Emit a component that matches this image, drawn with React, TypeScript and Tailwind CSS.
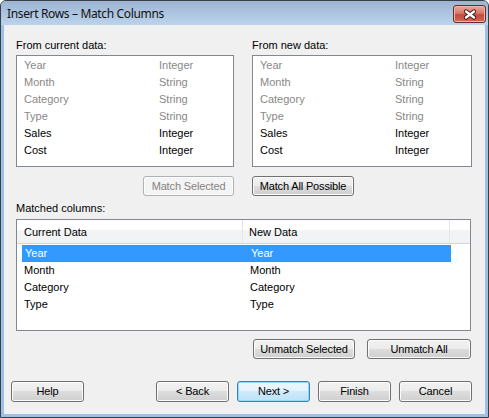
import React from 'react';

type Item = { name: string; type: string; used?: boolean };

const items: Item[] = [
    { name: 'Year', type: 'Integer', used: true },
    { name: 'Month', type: 'String', used: true },
    { name: 'Category', type: 'String', used: true },
    { name: 'Type', type: 'String', used: true },
    { name: 'Sales', type: 'Integer' },
    { name: 'Cost', type: 'Integer' },
];

const matched = ['Year', 'Month', 'Category', 'Type'];

const Btn = ({ label, className = '', disabled, isDefault }: { label: string; className?: string; disabled?: boolean; isDefault?: boolean }) => {
    let look = 'border-[#707070] text-black bg-[linear-gradient(to_bottom,#f2f2f2_0%,#ebebeb_50%,#dddddd_50%,#cfcfcf_100%)] shadow-[inset_0_0_0_1px_#fbfbfb]';
    if (disabled) look = 'border-[#adb2b5] text-[#838383] bg-[#f4f4f4] shadow-[inset_0_0_0_1px_#fcfcfc]';
    if (isDefault) look = 'border-[#3c7fb1] text-black bg-[linear-gradient(to_bottom,#eef7fd_0%,#e2f2fc_50%,#cdebfb_50%,#bde2f6_100%)] shadow-[inset_0_0_0_1px_#8edaf8]';
    return (
        <div className={`flex items-center justify-center rounded-[3px] border text-[11px] leading-[13px] tracking-[-0.15px] ${look} ${className}`}>
            {label}
        </div>
    );
};

const ListBox = ({ className = '' }: { className?: string }) => (
    <div className={`h-[112px] border border-[#828790] bg-white pt-[1px] ${className}`}>
        {items.map((it) => (
            <div key={it.name} className={`flex h-[17px] items-center pl-[7px] ${it.used ? 'text-[#888888]' : 'text-black'}`}>
                <span className="w-[135px]">{it.name}</span>
                <span>{it.type}</span>
            </div>
        ))}
    </div>
);

export default function App() {
    return (
        <div className="w-[489px] h-[418px] overflow-hidden rounded-t-[6px] border border-[#3a3f47] bg-[#9cc0e8] flex flex-col font-['Liberation_Sans',Arial,sans-serif]">
            {/* title bar */}
            <div className="h-[24px] shrink-0 flex items-start justify-between bg-gradient-to-b from-[#9cb5d4] to-[#bcd3eb] pl-[6px] pr-[2px]">
                <span className="mt-[5px] text-[12px] leading-[15px] text-[#111] font-['Noto_Sans',sans-serif] tracking-[-0.35px]">
                    Insert Rows – Match Columns
                </span>
                <div className="mt-[4px] w-[33px] h-[18px] rounded-[3px] border border-[#6b2b25] bg-[linear-gradient(to_bottom,#e9a99b_0%,#d8786a_45%,#c34a3b_55%,#cf6a55_100%)] shadow-[inset_0_0_0_1px_#efb7a9] flex items-center justify-center">
                    <svg width="14" height="11" viewBox="0 0 14 11">
                        <path d="M3 2.5 L11 8.5 M11 2.5 L3 8.5" stroke="#4a1410" strokeWidth="4.2" strokeLinecap="round" />
                        <path d="M3 2.5 L11 8.5 M11 2.5 L3 8.5" stroke="#ffffff" strokeWidth="2.4" strokeLinecap="round" />
                    </svg>
                </div>
            </div>

            {/* client area */}
            <div className="flex-1 mx-[3px] mb-[3px] bg-[#f0f0f0] pl-[12px] pr-[13px] pt-[14px] text-[11px] leading-[13px] text-black">
                <div className="flex justify-between">
                    <div className="w-[218px] flex flex-col">
                        <div className="h-[13px]">From current data:</div>
                        <ListBox className="mt-[3px]" />
                        <div className="mt-[9px] flex justify-end">
                            <Btn label="Match Selected" disabled className="w-[91px] h-[20px]" />
                        </div>
                    </div>
                    <div className="w-[220px] flex flex-col">
                        <div className="h-[13px]">From new data:</div>
                        <ListBox className="mt-[3px]" />
                        <div className="mt-[9px] flex">
                            <Btn label="Match All Possible" className="w-[102px] h-[20px]" />
                        </div>
                    </div>
                </div>

                <div className="mt-[6px] h-[13px]">Matched columns:</div>
                <div className="mt-[4px] w-[455px] h-[112px] border border-[#828790] bg-white">
                    <div className="h-[24px] flex border-b border-[#d5d5d5] bg-[linear-gradient(to_bottom,#ffffff_0%,#ffffff_45%,#f3f4f6_45%,#f1f2f4_100%)]">
                        <div className="w-[226px] flex items-center pl-[7px] pt-[2px] border-r border-[#e3e6ea]">Current Data</div>
                        <div className="w-[207px] flex items-center pl-[6px] pt-[2px] border-r border-[#e3e6ea]">New Data</div>
                        <div className="flex-1" />
                    </div>
                    <div className="mt-[1px]">
                        {matched.map((m, i) => (
                            <div
                                key={m}
                                className={`ml-[5px] w-[429px] h-[17px] flex items-center pl-[2px] ${i === 0 ? 'bg-[#3399ff] text-white border border-dotted border-[#c4701f] pl-[1px]' : ''}`}
                            >
                                <span className="w-[226px]">{m}</span>
                                <span>{m}</span>
                            </div>
                        ))}
                    </div>
                </div>

                <div className="mt-[8px] flex justify-end gap-[12px] pr-[1px]">
                    <Btn label="Unmatch Selected" className="w-[102px] h-[20px]" />
                    <Btn label="Unmatch All" className="w-[104px] h-[20px]" />
                </div>

                <div className="mt-[22px] flex items-center">
                    <Btn label="Help" className="-ml-[5px] w-[73px] h-[21px]" />
                    <div className="flex-1" />
                    <div className="flex gap-[8px]">
                        <Btn label="< Back" className="w-[73px] h-[21px]" />
                        <Btn label="Next >" isDefault className="w-[73px] h-[21px]" />
                        <Btn label="Finish" className="w-[73px] h-[21px]" />
                        <Btn label="Cancel" className="w-[73px] h-[21px]" />
                    </div>
                </div>
            </div>
        </div>
    );
}
